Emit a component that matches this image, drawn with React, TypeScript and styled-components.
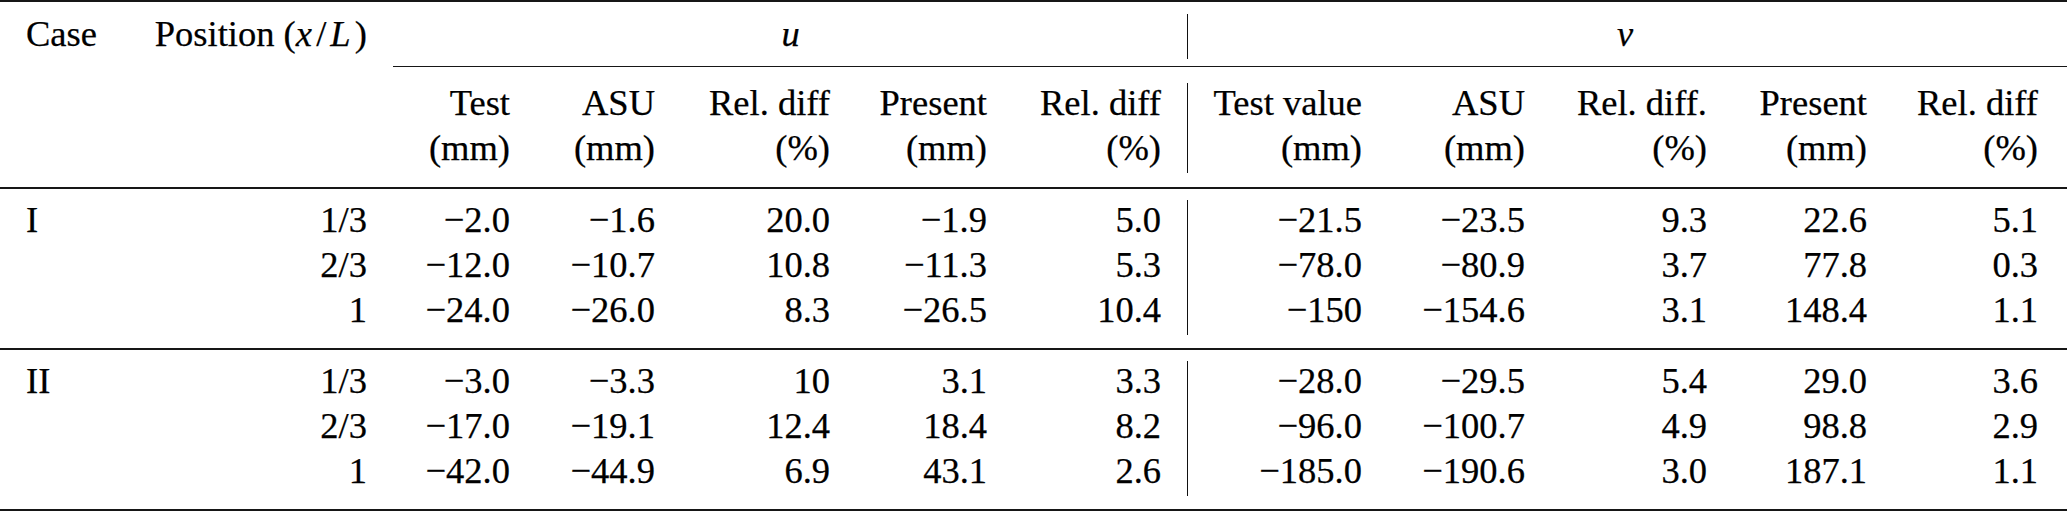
import React from "react";
import styled, { createGlobalStyle } from "styled-components";

const GlobalStyle = createGlobalStyle`
  html, body {
    margin: 0;
    padding: 0;
    background: #ffffff;
  }
`;

const COLS =
  "120px 247px 143px 145px 175px 157px 174px 27px 174px 163px 182px 160px 171px";

const Table = styled.div`
  width: 2067px;
  font-family: "Liberation Serif", "Times New Roman", serif;
  font-size: 36.5px;
  line-height: 45px;
  color: #000000;
  -webkit-text-stroke: 0.25px #000000;
`;

const Rule = styled.div<{ $h: number; $inset?: number }>`
  height: ${(p) => p.$h}px;
  margin-left: ${(p) => p.$inset ?? 0}px;
  background: #161616;
`;

const Band = styled.div<{ $pt: number; $pb: number; $rows: number }>`
  display: grid;
  grid-template-columns: ${COLS};
  grid-template-rows: repeat(${(p) => p.$rows}, auto);
  padding: ${(p) => p.$pt}px 29px ${(p) => p.$pb}px 0;
`;

const Divider = styled.div<{ $rows: number }>`
  grid-column: 8;
  grid-row: 1 / span ${(p) => p.$rows};
  border-right: 1.4px solid #111111;
  margin: 3px 0 -3px;
`;

const Label = styled.div`
  padding-left: 26px;
  text-align: left;
  white-space: nowrap;
`;

const Num = styled.div`
  text-align: right;
  white-space: nowrap;
`;

const HeadCell = styled.div`
  text-align: right;
  white-space: nowrap;
  line-height: 45px;
`;

const SpanHead = styled.div<{ $shift: number }>`
  grid-column: span 5;
  text-align: center;
  padding-left: ${(p) => p.$shift}px;
  font-style: italic;
`;

const MathVar = styled.span<{ $l?: number; $r?: number }>`
  font-style: italic;
  margin-left: ${(p) => p.$l ?? 0}em;
  margin-right: ${(p) => p.$r ?? 0}em;
`;

const Empty = styled.div``;

type Row = { label?: string; pos: string; u: string[]; v: string[] };

const groupI: Row[] = [
  { label: "I", pos: "1/3", u: ["−2.0", "−1.6", "20.0", "−1.9", "5.0"], v: ["−21.5", "−23.5", "9.3", "22.6", "5.1"] },
  { pos: "2/3", u: ["−12.0", "−10.7", "10.8", "−11.3", "5.3"], v: ["−78.0", "−80.9", "3.7", "77.8", "0.3"] },
  { pos: "1", u: ["−24.0", "−26.0", "8.3", "−26.5", "10.4"], v: ["−150", "−154.6", "3.1", "148.4", "1.1"] },
];

const groupII: Row[] = [
  { label: "II", pos: "1/3", u: ["−3.0", "−3.3", "10", "3.1", "3.3"], v: ["−28.0", "−29.5", "5.4", "29.0", "3.6"] },
  { pos: "2/3", u: ["−17.0", "−19.1", "12.4", "18.4", "8.2"], v: ["−96.0", "−100.7", "4.9", "98.8", "2.9"] },
  { pos: "1", u: ["−42.0", "−44.9", "6.9", "43.1", "2.6"], v: ["−185.0", "−190.6", "3.0", "187.1", "1.1"] },
];

const uHeads: [string, string][] = [
  ["Test", "(mm)"],
  ["ASU", "(mm)"],
  ["Rel. diff", "(%)"],
  ["Present", "(mm)"],
  ["Rel. diff", "(%)"],
];

const vHeads: [string, string][] = [
  ["Test value", "(mm)"],
  ["ASU", "(mm)"],
  ["Rel. diff.", "(%)"],
  ["Present", "(mm)"],
  ["Rel. diff", "(%)"],
];

function Group({ rows }: { rows: Row[] }) {
  return (
    <Band $pt={8} $pb={16} $rows={rows.length}>
      <Divider $rows={rows.length} />
      {rows.map((r, i) => (
        <React.Fragment key={i}>
          {r.label ? <Label>{r.label}</Label> : <Empty />}
          <Num>{r.pos}</Num>
          {r.u.map((x, j) => (
            <Num key={"u" + j}>{x}</Num>
          ))}
          {r.v.map((x, j) => (
            <Num key={"v" + j}>{x}</Num>
          ))}
        </React.Fragment>
      ))}
    </Band>
  );
}

export default function App() {
  return (
    <>
      <GlobalStyle />
      <Table>
        <Rule $h={2} />
        <Band $pt={9} $pb={10} $rows={1}>
          <Divider $rows={1} />
          <Label>Case</Label>
          <Num>
            Position (<MathVar $r={0.12}>x</MathVar>/<MathVar $l={0.1} $r={0.12}>L</MathVar>)
          </Num>
          <SpanHead $shift={53}>u</SpanHead>
          <SpanHead $shift={24}>v</SpanHead>
        </Band>
        <Rule $h={1} $inset={393} />
        <Band $pt={13} $pb={17} $rows={1}>
          <Divider $rows={1} />
          <Empty />
          <Empty />
          {uHeads.map(([a, b], i) => (
            <HeadCell key={"uh" + i}>
              {a}
              <br />
              {b}
            </HeadCell>
          ))}
          {vHeads.map(([a, b], i) => (
            <HeadCell key={"vh" + i}>
              {a}
              <br />
              {b}
            </HeadCell>
          ))}
        </Band>
        <Rule $h={2} />
        <Group rows={groupI} />
        <Rule $h={2} />
        <Group rows={groupII} />
        <Rule $h={2} />
      </Table>
    </>
  );
}
